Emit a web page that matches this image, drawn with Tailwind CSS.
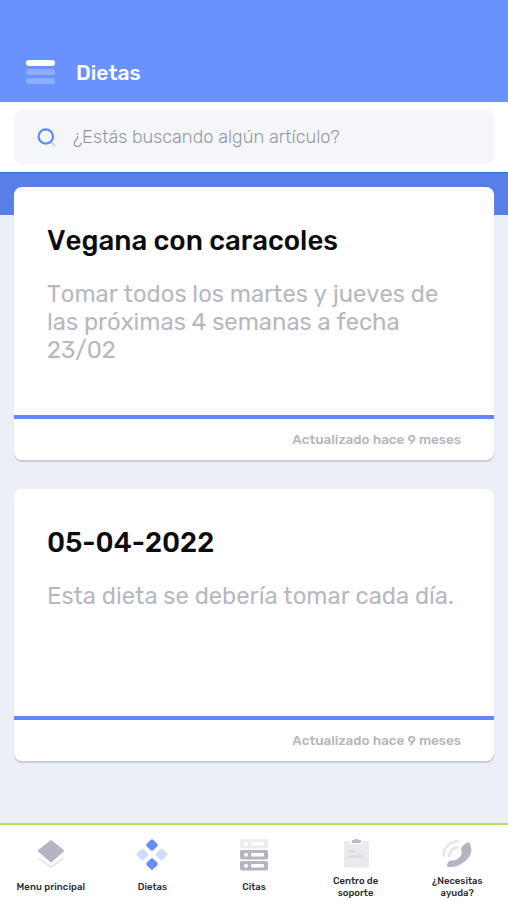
<!DOCTYPE html>
<html lang="es">
<head>
    <meta charset="UTF-8">
    <meta name="viewport" content="width=device-width, initial-scale=1.0">
    <title>Dietas</title>
    <script src="https://cdn.jsdelivr.net/npm/@tailwindcss/browser@4"></script>
</head>
<body class="bg-[#eceff8] font-['Rubik','Roboto',sans-serif] [font-kerning:none]">

<div class="flex flex-col h-[900px] overflow-hidden">

  <!-- Cabecera -->
  <header class="h-[102px] shrink-0 bg-[#6992ff] flex items-end px-[26px] pb-4">
    <button class="w-[29px] h-6 mb-0.5 flex flex-col justify-between" aria-label="Menu">
      <span class="w-full h-1.5 rounded-full bg-white"></span>
      <span class="w-full h-1.5 rounded-full bg-[#8dadff]"></span>
      <span class="w-full h-1.5 rounded-full bg-[#8dadff]"></span>
    </button>
    <h1 class="ml-[21px] text-[21px] leading-[26px] font-medium text-white whitespace-nowrap">Dietas</h1>
  </header>

  <!-- Buscador -->
  <div class="h-[70px] shrink-0 bg-white px-3.5 pt-2">
    <div class="h-[54px] rounded-lg bg-[#f4f6fa] flex items-center pl-[23px]">
      <svg class="w-5 h-5 shrink-0" viewBox="0 0 20 20" fill="none">
        <path d="M14 15l3.800 3.800" stroke="#c3d3fb" stroke-width="2" stroke-linecap="round"/>
        <circle cx="8.800" cy="9.500" r="7.200" stroke="#5e8af8" stroke-width="2.200"/>
      </svg>
      <span class="ml-4 mt-0.5 text-[18.300px] font-light text-[#96979e] whitespace-nowrap">¿Estás buscando algún artículo?</span>
    </div>
  </div>

  <!-- Listado de dietas -->
  <main class="flex-1">
    <div class="h-[43px] bg-[#587fe8] border-t border-[#3f6fdc]"></div>
    <div class="-mt-7 px-3.5 space-y-[29px] relative">

      <article class="h-[273px] rounded-lg bg-white shadow-[0_2px_1px_#c9cad0] flex flex-col">
        <div class="flex-1 px-[33px] pt-[38px]">
          <h2 class="text-[27.600px] leading-8 font-medium text-[#0c0c0e] whitespace-nowrap">Vegana con caracoles</h2>
          <p class="mt-[23px] text-[23.800px] leading-7 text-[#b7b8c0] whitespace-nowrap">Tomar todos los martes y jueves de<br>las próximas 4 semanas a fecha<br>23/02</p>
        </div>
        <div class="h-[45px] border-t-4 border-[#6189f5] pr-[33px] flex items-center justify-end">
          <span class="text-[13.500px] font-medium text-[#b5b6be] whitespace-nowrap">Actualizado hace 9 meses</span>
        </div>
      </article>

      <article class="h-[272px] rounded-lg bg-white shadow-[0_2px_1px_#c9cad0] flex flex-col">
        <div class="flex-1 px-[33px] pt-[38px]">
          <h2 class="text-[27.600px] leading-8 font-medium text-[#0c0c0e] whitespace-nowrap">05-04-2022</h2>
          <p class="mt-[23px] text-[23.800px] leading-7 text-[#b7b8c0] whitespace-nowrap">Esta dieta se debería tomar cada día.</p>
        </div>
        <div class="h-[45px] border-t-4 border-[#6189f5] pr-[33px] flex items-center justify-end">
          <span class="text-[13.500px] font-medium text-[#b5b6be] whitespace-nowrap">Actualizado hace 9 meses</span>
        </div>
      </article>

    </div>
  </main>

  <!-- Menu inferior -->
  <nav class="h-[77px] shrink-0 bg-white border-t-2 border-[#b4e052] grid grid-cols-5 text-[9.500px] leading-[11.500px] font-medium text-[#2c2c31] text-center">
    <a class="flex flex-col items-center pt-3.5">
      <svg class="w-8 h-8 shrink-0" viewBox="0 0 32 32">
        <path d="M3.500 19.500L16 28l12.500-8.500" fill="none" stroke="#e6e6eb" stroke-width="2"/>
        <path d="M16.800 1.500l12 9.500c.6.500.6 1 0 1.500L16.800 23c-.5.400-1 .4-1.500 0L3.200 12.500c-.6-.5-.6-1 0-1.500L15.300 1.500c.5-.4 1-.4 1.500 0z" fill="#b4b4c5"/>
      </svg>
      <span class="h-[23px] mt-1 flex items-center tracking-[0.1px] whitespace-nowrap">Menu principal</span>
    </a>
    <a class="flex flex-col items-center pt-3.5">
      <svg class="w-8 h-8 shrink-0" viewBox="0 0 32 32">
        <rect x="-4.600" y="-4.600" width="9.200" height="9.200" rx="2" transform="translate(16 6) rotate(45)" fill="#668df6"/>
        <rect x="-4.600" y="-4.600" width="9.200" height="9.200" rx="2" transform="translate(6.500 15.500) rotate(45)" fill="#cfdcfb"/>
        <rect x="-4.600" y="-4.600" width="9.200" height="9.200" rx="2" transform="translate(25.500 15.500) rotate(45)" fill="#cfdcfb"/>
        <rect x="-4.600" y="-4.600" width="9.200" height="9.200" rx="2" transform="translate(16 25) rotate(45)" fill="#668df6"/>
      </svg>
      <span class="h-[23px] mt-1 flex items-center whitespace-nowrap">Dietas</span>
    </a>
    <a class="flex flex-col items-center pt-3.5">
      <svg class="w-8 h-8 shrink-0" viewBox="0 0 32 32">
        <rect x="2" y="0" width="28" height="9.500" rx="2" fill="#ececf0"/>
        <rect x="2" y="11" width="28" height="9.500" rx="2" fill="#b4b4c3"/>
        <rect x="2" y="22" width="28" height="9.500" rx="2" fill="#b4b4c3"/>
        <g fill="#fff">
          <circle cx="8" cy="4.800" r="2"/><rect x="13" y="3" width="13" height="3.500" rx="1"/>
          <circle cx="8" cy="15.800" r="2"/><rect x="13" y="14" width="13" height="3.500" rx="1"/>
          <circle cx="8" cy="26.800" r="2"/><rect x="13" y="25" width="13" height="3.500" rx="1"/>
        </g>
      </svg>
      <span class="h-[23px] mt-1 flex items-center whitespace-nowrap">Citas</span>
    </a>
    <a class="flex flex-col items-center pt-3.5">
      <svg class="w-8 h-8 shrink-0" viewBox="0 0 32 32">
        <rect x="4" y="2" width="25" height="26.500" rx="1.500" fill="#e9e9ee"/>
        <path d="M10.500 5V1.800c0-1 .6-1.500 1.500-1.500h8.500c.9 0 1.500.5 1.500 1.500V5z" fill="#fff"/>
        <path d="M11.800 4V2.200c0-.8.500-1.300 1.300-1.300h1.300c.5-1.600 3.400-1.600 3.900 0h1.300c.8 0 1.300.5 1.300 1.300V4z" fill="#b9b9c7"/>
        <path d="M8.500 12.500h6.500M8.500 17.500h14" stroke="#d8d8e0" stroke-width="2.200"/>
      </svg>
      <span class="h-[23px] mt-1 flex items-center">Centro de<br>soporte</span>
    </a>
    <a class="flex flex-col items-center pt-3.5">
      <svg class="w-8 h-8 shrink-0" viewBox="0 0 32 32">
        <path d="M2.500 17.500C2.500 9 9 2 18 2.200M8 18.500c0-6 4-10.300 10-10" fill="none" stroke="#e6e6ec" stroke-width="2.800"/>
        <path d="M26.200 3.500c.9-.6 1.800-.3 2.300.7 1.200 2.400 2.600 6.600 1.500 9.800-2.600 7.700-11.400 13.800-20.900 14.300-1.500.1-3.500-1-3.200-2 .5-2.200 2-4.900 3.700-4.900 2 0 3.500.5 5.500-.6 2.300-1.300 4.800-3.700 5.600-6.400.5-1.800-1.200-3.500-.5-5.500.7-2.100 3.600-3.900 6-5.400z" fill="#b4b4c3"/>
      </svg>
      <span class="h-[23px] mt-1 flex items-center">¿Necesitas<br>ayuda?</span>
    </a>
  </nav>

</div>

</body>
</html>
